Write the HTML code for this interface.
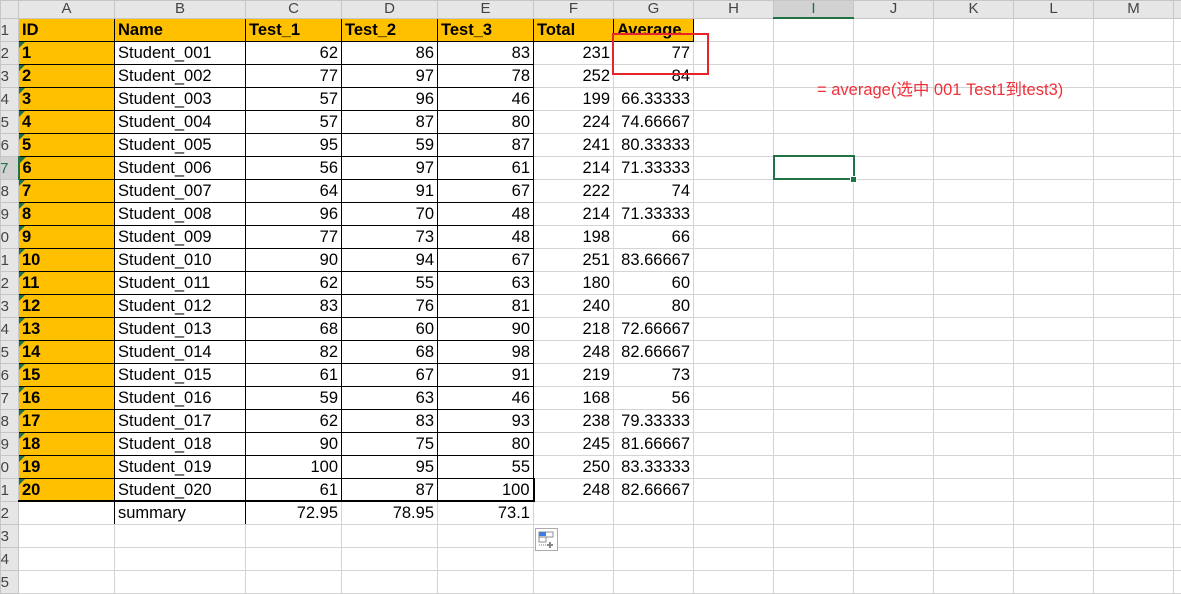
<!DOCTYPE html>
<html><head><meta charset="utf-8"><style>
body{margin:0;width:1181px;height:592px;overflow:hidden;background:#fff;font-family:"Liberation Sans","Noto Sans CJK SC",sans-serif;position:relative}
table{border-collapse:collapse;table-layout:fixed;position:absolute;left:0;top:0;width:1181px}
td{border:1px solid #d4d4d4;padding:2px 3px 0 3px;font-size:16.5px;white-space:nowrap;overflow:hidden;height:23px;box-sizing:border-box;color:#000;position:relative}
tr.h td{height:16px;line-height:16px;background:#e6e6e6;color:#444;text-align:center;font-size:15px;border-color:#c6c6c6;padding:0}
td.rn{background:#e6e6e6;border-color:#c6c6c6;padding:0;color:#444;font-size:15px}
td.rn span{position:absolute;right:9px;top:3px}
td.o{background:#ffc000;font-weight:bold}
td.b{border-color:#000}
td.r{text-align:right}
td.a::before{content:"";position:absolute;left:0;top:0;border-top:6px solid #1e7145;border-right:6px solid transparent}
</style></head><body>
<table>
<colgroup><col style="width:18px"><col style="width:96px"><col style="width:131px"><col style="width:96px"><col style="width:96px"><col style="width:96px"><col style="width:80px"><col style="width:80px"><col style="width:80px"><col style="width:80px"><col style="width:80px"><col style="width:80px"><col style="width:80px"><col style="width:80px"><col style="width:8px"></colgroup>
<tr class="h"><td></td><td>A</td><td>B</td><td>C</td><td>D</td><td>E</td><td>F</td><td>G</td><td>H</td><td style="background:#d2d2d2;color:#217346;border-bottom:2px solid #217346">I</td><td>J</td><td>K</td><td>L</td><td>M</td><td></td></tr>
<tr><td class="rn"><span>1</span></td><td class="o b">ID</td><td class="o b">Name</td><td class="o b">Test_1</td><td class="o b">Test_2</td><td class="o b">Test_3</td><td class="o b">Total</td><td class="o b">Average</td><td></td><td></td><td></td><td></td><td></td><td></td><td></td></tr>
<tr><td class="rn"><span>2</span></td><td class="o b a">1</td><td class="b">Student_001</td><td class="b r">62</td><td class="b r">86</td><td class="b r">83</td><td class="r">231</td><td class="r">77</td><td></td><td></td><td></td><td></td><td></td><td></td><td></td></tr>
<tr><td class="rn"><span>3</span></td><td class="o b a">2</td><td class="b">Student_002</td><td class="b r">77</td><td class="b r">97</td><td class="b r">78</td><td class="r">252</td><td class="r">84</td><td></td><td></td><td></td><td></td><td></td><td></td><td></td></tr>
<tr><td class="rn"><span>4</span></td><td class="o b a">3</td><td class="b">Student_003</td><td class="b r">57</td><td class="b r">96</td><td class="b r">46</td><td class="r">199</td><td class="r">66.33333</td><td></td><td></td><td></td><td></td><td></td><td></td><td></td></tr>
<tr><td class="rn"><span>5</span></td><td class="o b a">4</td><td class="b">Student_004</td><td class="b r">57</td><td class="b r">87</td><td class="b r">80</td><td class="r">224</td><td class="r">74.66667</td><td></td><td></td><td></td><td></td><td></td><td></td><td></td></tr>
<tr><td class="rn"><span>6</span></td><td class="o b a">5</td><td class="b">Student_005</td><td class="b r">95</td><td class="b r">59</td><td class="b r">87</td><td class="r">241</td><td class="r">80.33333</td><td></td><td></td><td></td><td></td><td></td><td></td><td></td></tr>
<tr><td class="rn" style="background:#d2d2d2;color:#217346;border-right:2px solid #217346"><span>7</span></td><td class="o b a">6</td><td class="b">Student_006</td><td class="b r">56</td><td class="b r">97</td><td class="b r">61</td><td class="r">214</td><td class="r">71.33333</td><td></td><td style="border:2px solid #217346"></td><td></td><td></td><td></td><td></td><td></td></tr>
<tr><td class="rn"><span>8</span></td><td class="o b a">7</td><td class="b">Student_007</td><td class="b r">64</td><td class="b r">91</td><td class="b r">67</td><td class="r">222</td><td class="r">74</td><td></td><td></td><td></td><td></td><td></td><td></td><td></td></tr>
<tr><td class="rn"><span>9</span></td><td class="o b a">8</td><td class="b">Student_008</td><td class="b r">96</td><td class="b r">70</td><td class="b r">48</td><td class="r">214</td><td class="r">71.33333</td><td></td><td></td><td></td><td></td><td></td><td></td><td></td></tr>
<tr><td class="rn"><span>10</span></td><td class="o b a">9</td><td class="b">Student_009</td><td class="b r">77</td><td class="b r">73</td><td class="b r">48</td><td class="r">198</td><td class="r">66</td><td></td><td></td><td></td><td></td><td></td><td></td><td></td></tr>
<tr><td class="rn"><span>11</span></td><td class="o b a">10</td><td class="b">Student_010</td><td class="b r">90</td><td class="b r">94</td><td class="b r">67</td><td class="r">251</td><td class="r">83.66667</td><td></td><td></td><td></td><td></td><td></td><td></td><td></td></tr>
<tr><td class="rn"><span>12</span></td><td class="o b a">11</td><td class="b">Student_011</td><td class="b r">62</td><td class="b r">55</td><td class="b r">63</td><td class="r">180</td><td class="r">60</td><td></td><td></td><td></td><td></td><td></td><td></td><td></td></tr>
<tr><td class="rn"><span>13</span></td><td class="o b a">12</td><td class="b">Student_012</td><td class="b r">83</td><td class="b r">76</td><td class="b r">81</td><td class="r">240</td><td class="r">80</td><td></td><td></td><td></td><td></td><td></td><td></td><td></td></tr>
<tr><td class="rn"><span>14</span></td><td class="o b a">13</td><td class="b">Student_013</td><td class="b r">68</td><td class="b r">60</td><td class="b r">90</td><td class="r">218</td><td class="r">72.66667</td><td></td><td></td><td></td><td></td><td></td><td></td><td></td></tr>
<tr><td class="rn"><span>15</span></td><td class="o b a">14</td><td class="b">Student_014</td><td class="b r">82</td><td class="b r">68</td><td class="b r">98</td><td class="r">248</td><td class="r">82.66667</td><td></td><td></td><td></td><td></td><td></td><td></td><td></td></tr>
<tr><td class="rn"><span>16</span></td><td class="o b a">15</td><td class="b">Student_015</td><td class="b r">61</td><td class="b r">67</td><td class="b r">91</td><td class="r">219</td><td class="r">73</td><td></td><td></td><td></td><td></td><td></td><td></td><td></td></tr>
<tr><td class="rn"><span>17</span></td><td class="o b a">16</td><td class="b">Student_016</td><td class="b r">59</td><td class="b r">63</td><td class="b r">46</td><td class="r">168</td><td class="r">56</td><td></td><td></td><td></td><td></td><td></td><td></td><td></td></tr>
<tr><td class="rn"><span>18</span></td><td class="o b a">17</td><td class="b">Student_017</td><td class="b r">62</td><td class="b r">83</td><td class="b r">93</td><td class="r">238</td><td class="r">79.33333</td><td></td><td></td><td></td><td></td><td></td><td></td><td></td></tr>
<tr><td class="rn"><span>19</span></td><td class="o b a">18</td><td class="b">Student_018</td><td class="b r">90</td><td class="b r">75</td><td class="b r">80</td><td class="r">245</td><td class="r">81.66667</td><td></td><td></td><td></td><td></td><td></td><td></td><td></td></tr>
<tr><td class="rn"><span>20</span></td><td class="o b a">19</td><td class="b">Student_019</td><td class="b r">100</td><td class="b r">95</td><td class="b r">55</td><td class="r">250</td><td class="r">83.33333</td><td></td><td></td><td></td><td></td><td></td><td></td><td></td></tr>
<tr><td class="rn"><span>21</span></td><td class="o b a" style="border-bottom:2px solid #000">20</td><td class="b" style="border-bottom:2px solid #000">Student_020</td><td class="b r" style="border-bottom:2px solid #000">61</td><td class="b r" style="border-bottom:2px solid #000">87</td><td class="b r" style="border-bottom:2px solid #000;border-right:2px solid #000">100</td><td class="r">248</td><td class="r">82.66667</td><td></td><td></td><td></td><td></td><td></td><td></td><td></td></tr>
<tr><td class="rn"><span>22</span></td><td style="border-right:1px solid #000"></td><td style="border-left:1px solid #000;border-right:1px solid #000">summary</td><td class="r" style="border-left:1px solid #000">72.95</td><td class="r">78.95</td><td class="r">73.1</td><td></td><td></td><td></td><td></td><td></td><td></td><td></td><td></td><td></td></tr>
<tr><td class="rn"><span>23</span></td><td></td><td></td><td></td><td></td><td></td><td></td><td></td><td></td><td></td><td></td><td></td><td></td><td></td><td></td></tr>
<tr><td class="rn"><span>24</span></td><td></td><td></td><td></td><td></td><td></td><td></td><td></td><td></td><td></td><td></td><td></td><td></td><td></td><td></td></tr>
<tr><td class="rn"><span>25</span></td><td></td><td></td><td></td><td></td><td></td><td></td><td></td><td></td><td></td><td></td><td></td><td></td><td></td><td></td></tr>
</table>
<div style="position:absolute;left:612px;top:33px;width:93px;height:38px;border:2px solid #e8232a"></div>
<div style="position:absolute;left:850px;top:176px;width:5px;height:5px;background:#217346;border:1px solid #fff"></div>
<div style="position:absolute;left:817px;top:76px;font-size:16.5px;color:#f0303a;white-space:nowrap">= average(选中 001 Test1到test3)</div>
<div style="position:absolute;left:535px;top:528px;width:21px;height:21px;border:1px solid #ababab;background:#fff">
<svg width="21" height="21" viewBox="0 0 21 21"><rect x="3" y="3" width="7" height="4" fill="#3b7de9"/><rect x="3" y="3" width="14" height="5" fill="none" stroke="#777" stroke-width="0.8"/><rect x="3" y="8" width="7" height="5" fill="none" stroke="#777" stroke-width="0.8"/><path d="M3 16h8" stroke="#777" stroke-dasharray="1 1"/><path d="M14 13v6M11 16h6" stroke="#888" stroke-width="2"/></svg></div>
</body></html>
